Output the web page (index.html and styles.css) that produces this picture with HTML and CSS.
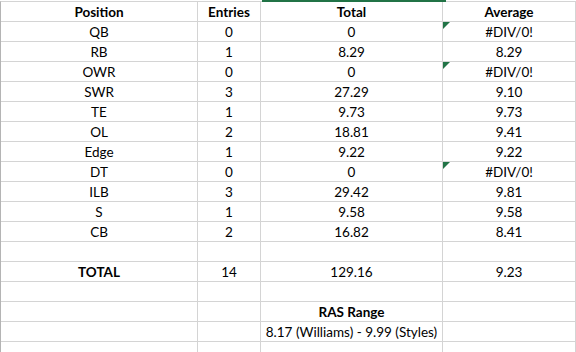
FILE: index.html
```html
<!DOCTYPE html>
<html>
<head>
<meta charset="utf-8">
<link rel="stylesheet" href="styles.css">
</head>
<body>
<div class="sheet">
  <div class="sel-edge"></div>
  <div class="grid">
    <div class="c b">Position</div><div class="c b">Entries</div><div class="c b">Total</div><div class="c b">Average</div>
    <div class="c">QB</div><div class="c">0</div><div class="c">0</div><div class="c flag">#DIV/0!</div>
    <div class="c">RB</div><div class="c">1</div><div class="c">8.29</div><div class="c">8.29</div>
    <div class="c">OWR</div><div class="c">0</div><div class="c">0</div><div class="c flag">#DIV/0!</div>
    <div class="c">SWR</div><div class="c">3</div><div class="c">27.29</div><div class="c">9.10</div>
    <div class="c">TE</div><div class="c">1</div><div class="c">9.73</div><div class="c">9.73</div>
    <div class="c">OL</div><div class="c">2</div><div class="c">18.81</div><div class="c">9.41</div>
    <div class="c">Edge</div><div class="c">1</div><div class="c">9.22</div><div class="c">9.22</div>
    <div class="c">DT</div><div class="c">0</div><div class="c">0</div><div class="c flag">#DIV/0!</div>
    <div class="c">ILB</div><div class="c">3</div><div class="c">29.42</div><div class="c">9.81</div>
    <div class="c">S</div><div class="c">1</div><div class="c">9.58</div><div class="c">9.58</div>
    <div class="c">CB</div><div class="c">2</div><div class="c">16.82</div><div class="c">8.41</div>
    <div class="c"></div><div class="c"></div><div class="c"></div><div class="c"></div>
    <div class="c b">TOTAL</div><div class="c">14</div><div class="c">129.16</div><div class="c">9.23</div>
    <div class="c"></div><div class="c"></div><div class="c"></div><div class="c"></div>
    <div class="c"></div><div class="c"></div><div class="c b">RAS Range</div><div class="c"></div>
    <div class="c"></div><div class="c"></div><div class="c">8.17 (Williams) - 9.99 (Styles)</div><div class="c"></div>
    <div class="c"></div><div class="c"></div><div class="c"></div><div class="c"></div>
  </div>
</div>
</body>
</html>
```
FILE: styles.css
```css
html, body {
  margin: 0;
  padding: 0;
  background: #ffffff;
  overflow: hidden;
  width: 576px;
  height: 352px;
}
.sheet {
  position: relative;
  padding-top: 1px;
  font-family: Lato, "Liberation Sans", sans-serif;
  font-size: 13.5px;
  color: #000000;
}
.sel-edge {
  position: absolute;
  left: 262px;
  top: 0;
  width: 184px;
  height: 2px;
  background: #217346;
}
.grid {
  display: grid;
  grid-template-columns: 197px 63px 182px 133px;
  grid-auto-rows: 20px;
  border-top: 1px solid #d4d4d4;
  border-left: 1px solid #b4b4b4;
  width: max-content;
}
.c {
  position: relative;
  border-right: 1px solid #d4d4d4;
  border-bottom: 1px solid #d4d4d4;
  text-align: center;
  line-height: 17px;
  padding-top: 2px;
  white-space: nowrap;
}
.b {
  font-weight: bold;
}
.flag::before {
  content: "";
  position: absolute;
  left: 0;
  top: 0;
  border-top: 7px solid #217346;
  border-right: 7px solid transparent;
}
```
